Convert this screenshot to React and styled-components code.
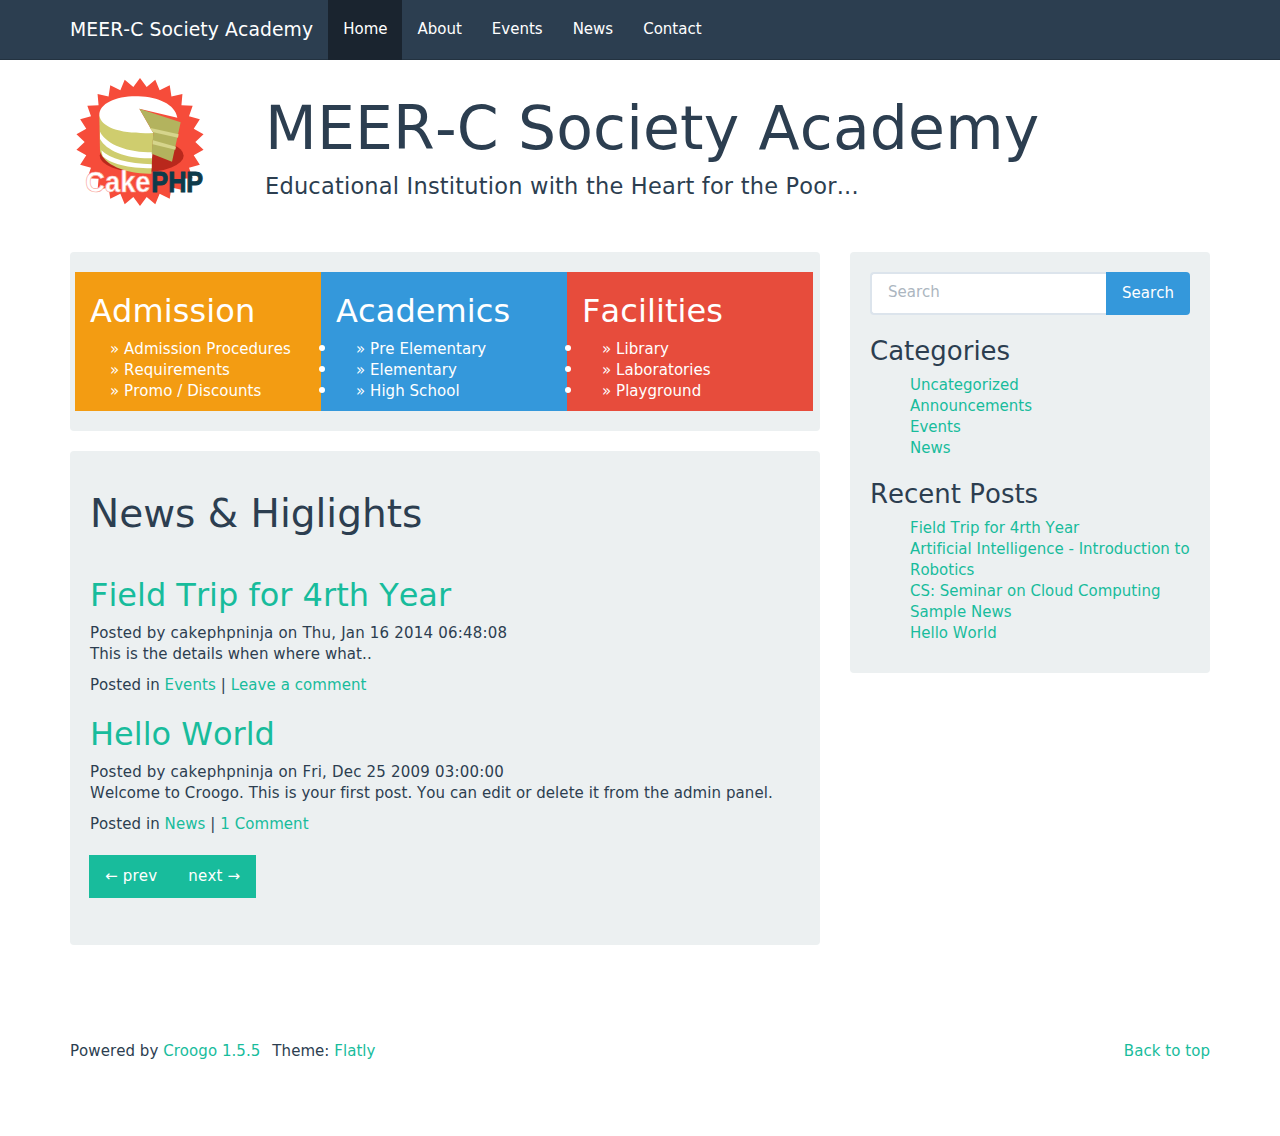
import React from "react";
import styled, { createGlobalStyle } from "styled-components";

const GlobalStyle = createGlobalStyle`
  html, body { margin: 0; padding: 0; }
  body {
    background: #fff;
    color: #2c3e50;
    font-family: "DejaVu Sans", sans-serif;
    font-size: 15px;
    line-height: 21px;
    font-kerning: none;
    font-variant-ligatures: none;
  }
  * { box-sizing: border-box; }
  a { color: #18bc9c; text-decoration: none; }
`;

const Page = styled.div`
  min-height: 1136px;
`;

const Navbar = styled.nav`
  height: 60px;
  background: #2c3e50;
  padding: 0 70px;
  display: flex;
  border-bottom: 1px solid #233240;
`;

const Brand = styled.a`
  color: #fff;
  font-size: 18.75px;
  letter-spacing: 0.1px;
  line-height: 59px;
  margin-right: 15px;
`;

const NavLink = styled.a`
  color: #fff;
  padding: 0 15px;
  height: 60px;
  line-height: 58px;
  background: ${(props) => (props.active ? "#1a242f" : "transparent")};
`;

const Header = styled.header`
  display: flex;
  padding: 18px 70px 0 76px;
  height: 192px;
`;

const LogoBox = styled.div`
  width: 189px;
  flex: none;
`;

const Titles = styled.div`
  padding-top: 17px;
`;

const SiteTitle = styled.h1`
  font-size: 60px;
  letter-spacing: 0.15px;
  line-height: 66px;
  font-weight: 400;
  margin: 0 0 13px;
`;

const SiteTagline = styled.h4`
  font-size: 22.5px;
  letter-spacing: 0.2px;
  line-height: 25px;
  font-weight: 400;
  margin: 0;
`;

const Columns = styled.div`
  display: flex;
  gap: 30px;
  padding: 0 70px;
  align-items: flex-start;
`;

const Main = styled.main`
  width: 750px;
  flex: none;
  display: flex;
  flex-direction: column;
  gap: 20px;
`;

const Sidebar = styled.aside`
  width: 360px;
  flex: none;
`;

const Well = styled.section`
  background: #ecf0f1;
  border-radius: 4px;
  padding: 20px;
`;

const BlockRow = styled.div`
  display: grid;
  grid-template-columns: repeat(3, 246px);
  margin: 0 -15px;
`;

const Block = styled.div`
  background: ${(props) => props.color};
  color: #fff;
  padding: 22px 15px 10px;
  height: 139px;
`;

const BlockTitle = styled.h2`
  font-size: 32px;
  letter-spacing: 0.1px;
  line-height: 35px;
  font-weight: 400;
  margin: 0 0 10px;
`;

const BlockList = styled.ul`
  list-style: none;
  margin: 0;
  padding: 0 0 0 20px;
  letter-spacing: 0.05px;
`;

const BlockItem = styled.li`
  position: relative;
  &::before {
    content: "";
    display: ${(props) => (props.dot ? "block" : "none")};
    position: absolute;
    left: -37px;
    top: 6px;
    width: 6px;
    height: 6px;
    border-radius: 50%;
    background: #fff;
  }
`;

const PageTitle = styled.h1`
  font-size: 39px;
  line-height: 43px;
  font-weight: 400;
  margin: 21px 0 43px;
`;

const Post = styled.article`
  margin-bottom: 21px;
`;

const PostTitle = styled.h2`
  font-size: 32px;
  line-height: 35px;
  font-weight: 400;
  margin: 0 0 10px;
`;

const PostText = styled.div`
  letter-spacing: ${(props) => (props.dated ? "0.2px" : "0.07px")};
`;

const PostMeta = styled.div`
  margin-top: 10px;
  letter-spacing: 0.07px;
`;

const Pager = styled.div`
  display: inline-flex;
  margin: -1px 0 27px -1px;
  background: #18bc9c;
  height: 43px;
`;

const PagerLink = styled.a`
  color: #fff;
  letter-spacing: 0.2px;
  line-height: 42px;
  padding: ${(props) => (props.next ? "0 16px 0 15px" : "0 16px")};
`;

const SearchForm = styled.form`
  display: flex;
  height: 43px;
  margin-bottom: 22px;
`;

const SearchInput = styled.input`
  width: 236px;
  flex: none;
  height: 43px;
  border: 2px solid #dce4ec;
  border-right: 0;
  border-radius: 4px 0 0 4px;
  background: #fff;
  padding: 0 16px 3px;
  font: inherit;
  color: #2c3e50;
  outline: none;
  &::placeholder {
    color: #acb6c0;
    opacity: 1;
  }
`;

const SearchButton = styled.button`
  width: 84px;
  height: 43px;
  border: 0;
  border-radius: 0 4px 4px 0;
  background: #3498db;
  color: #fff;
  font: inherit;
  padding: 0;
`;

const SideTitle = styled.h3`
  font-size: 26px;
  line-height: 29px;
  font-weight: 400;
  margin: 0 0 9px;
`;

const SideList = styled.ul`
  list-style: none;
  margin: 0 0 ${(props) => (props.last ? "9px" : "21px")};
  padding: 0 0 0 40px;
`;

const Footer = styled.footer`
  display: flex;
  justify-content: space-between;
  padding: 0 70px;
  margin-top: 96px;
  letter-spacing: 0.05px;
`;

const FooterGroup = styled.div`
  display: flex;
  gap: 12px;
`;

const blocks = [
  { title: "Admission", color: "#f39c12", items: ["Admission Procedures", "Requirements", "Promo / Discounts"] },
  { title: "Academics", color: "#3498db", dot: true, items: ["Pre Elementary", "Elementary", "High School"] },
  { title: "Facilities", color: "#e74c3c", dot: true, items: ["Library", "Laboratories", "Playground"] },
];

const categories = ["Uncategorized", "Announcements", "Events", "News"];

const recentPosts = [
  "Field Trip for 4rth Year",
  "Artificial Intelligence - Introduction to Robotics",
  "CS: Seminar on Cloud Computing",
  "Sample News",
  "Hello World",
];

// starburst behind the cake
const starPoints = () => {
  const pts = [];
  const n = 26;
  for (let i = 0; i < n * 2; i++) {
    const r = i % 2 === 0 ? 192 : 166;
    const a = (Math.PI * i) / n - Math.PI / 2;
    pts.push(`${(240 + r * Math.cos(a)).toFixed(1)},${(231 + r * Math.sin(a)).toFixed(1)}`);
  }
  return pts.join(" ");
};

const CakeLogo = () => (
  <svg width="128" height="128" viewBox="48 39 384 384">
    <polygon points={starPoints()} fill="#f64c3a" />
    <ellipse cx="245" cy="272" rx="126" ry="50" fill="#b9281c" />
    <path d="M118 150 L120 258 C130 300 200 328 274 326 L280 200 Z" fill="#cfcd6e" />
    <path d="M120 200 C140 240 205 262 277 262 L276 280 C200 282 140 258 120 222 Z" fill="#fff" />
    <path d="M124 256 C150 282 205 296 275 298 L275 310 C205 310 150 296 128 274 Z" fill="#fff" />
    <path d="M118 150 C118 115 170 92 235 94 C295 96 345 118 352 158 L238 131 L280 204 C190 208 122 190 118 150 Z" fill="#fff" />
    <path d="M238 131 L362 172 L336 290 L275 266 L280 204 Z" fill="#b3b35e" />
    <path d="M268 188 L356 208 L354 218 L280 202 Z" fill="#d6d58c" />
    <path d="M279 226 L348 245 L346 254 L278 238 Z" fill="#d6d58c" />
    <text transform="translate(76 381) scale(0.93 1)" fontFamily="'Liberation Sans', sans-serif" fontWeight="700" fontSize="88" fill="#fff" stroke="#f9a79e" strokeWidth="2">Cake</text>
    <text transform="translate(274 381) scale(0.86 1)" fontFamily="'Liberation Sans', sans-serif" fontWeight="700" fontSize="88" fill="#0e3b4b" stroke="#0e3b4b" strokeWidth="3">PHP</text>
  </svg>
);

const App = () => (
  <Page>
    <GlobalStyle />
    <Navbar>
      <Brand href="#">MEER-C Society Academy</Brand>
      <NavLink href="#" active>Home</NavLink>
      <NavLink href="#">About</NavLink>
      <NavLink href="#">Events</NavLink>
      <NavLink href="#">News</NavLink>
      <NavLink href="#">Contact</NavLink>
    </Navbar>

    <Header>
      <LogoBox>
        <CakeLogo />
      </LogoBox>
      <Titles>
        <SiteTitle>MEER-C Society Academy</SiteTitle>
        <SiteTagline>Educational Institution with the Heart for the Poor...</SiteTagline>
      </Titles>
    </Header>

    <Columns>
      <Main>
        <Well>
          <BlockRow>
            {blocks.map((b) => (
              <Block key={b.title} color={b.color}>
                <BlockTitle>{b.title}</BlockTitle>
                <BlockList>
                  {b.items.map((item) => (
                    <BlockItem key={item} dot={b.dot}>» {item}</BlockItem>
                  ))}
                </BlockList>
              </Block>
            ))}
          </BlockRow>
        </Well>

        <Well>
          <PageTitle>News &amp; Higlights</PageTitle>
          <Post>
            <PostTitle><a href="#">Field Trip for 4rth Year</a></PostTitle>
            <PostText dated>Posted by cakephpninja on Thu, Jan 16 2014 06:48:08</PostText>
            <PostText>This is the details when where what..</PostText>
            <PostMeta>Posted in <a href="#">Events</a> | <a href="#">Leave a comment</a></PostMeta>
          </Post>
          <Post>
            <PostTitle><a href="#">Hello World</a></PostTitle>
            <PostText dated>Posted by cakephpninja on Fri, Dec 25 2009 03:00:00</PostText>
            <PostText>Welcome to Croogo. This is your first post. You can edit or delete it from the admin panel.</PostText>
            <PostMeta>Posted in <a href="#">News</a> | <a href="#">1 Comment</a></PostMeta>
          </Post>
          <Pager>
            <PagerLink href="#">← prev</PagerLink>
            <PagerLink href="#" next>next →</PagerLink>
          </Pager>
        </Well>
      </Main>

      <Sidebar>
        <Well>
          <SearchForm>
            <SearchInput placeholder="Search" />
            <SearchButton type="button">Search</SearchButton>
          </SearchForm>
          <SideTitle>Categories</SideTitle>
          <SideList>
            {categories.map((c) => (
              <li key={c}><a href="#">{c}</a></li>
            ))}
          </SideList>
          <SideTitle>Recent Posts</SideTitle>
          <SideList last>
            {recentPosts.map((p) => (
              <li key={p}><a href="#">{p}</a></li>
            ))}
          </SideList>
        </Well>
      </Sidebar>
    </Columns>

    <Footer>
      <FooterGroup>
        <span>Powered by <a href="#">Croogo 1.5.5</a></span>
        <span>Theme: <a href="#">Flatly</a></span>
      </FooterGroup>
      <a href="#">Back to top</a>
    </Footer>
  </Page>
);

export default App;
